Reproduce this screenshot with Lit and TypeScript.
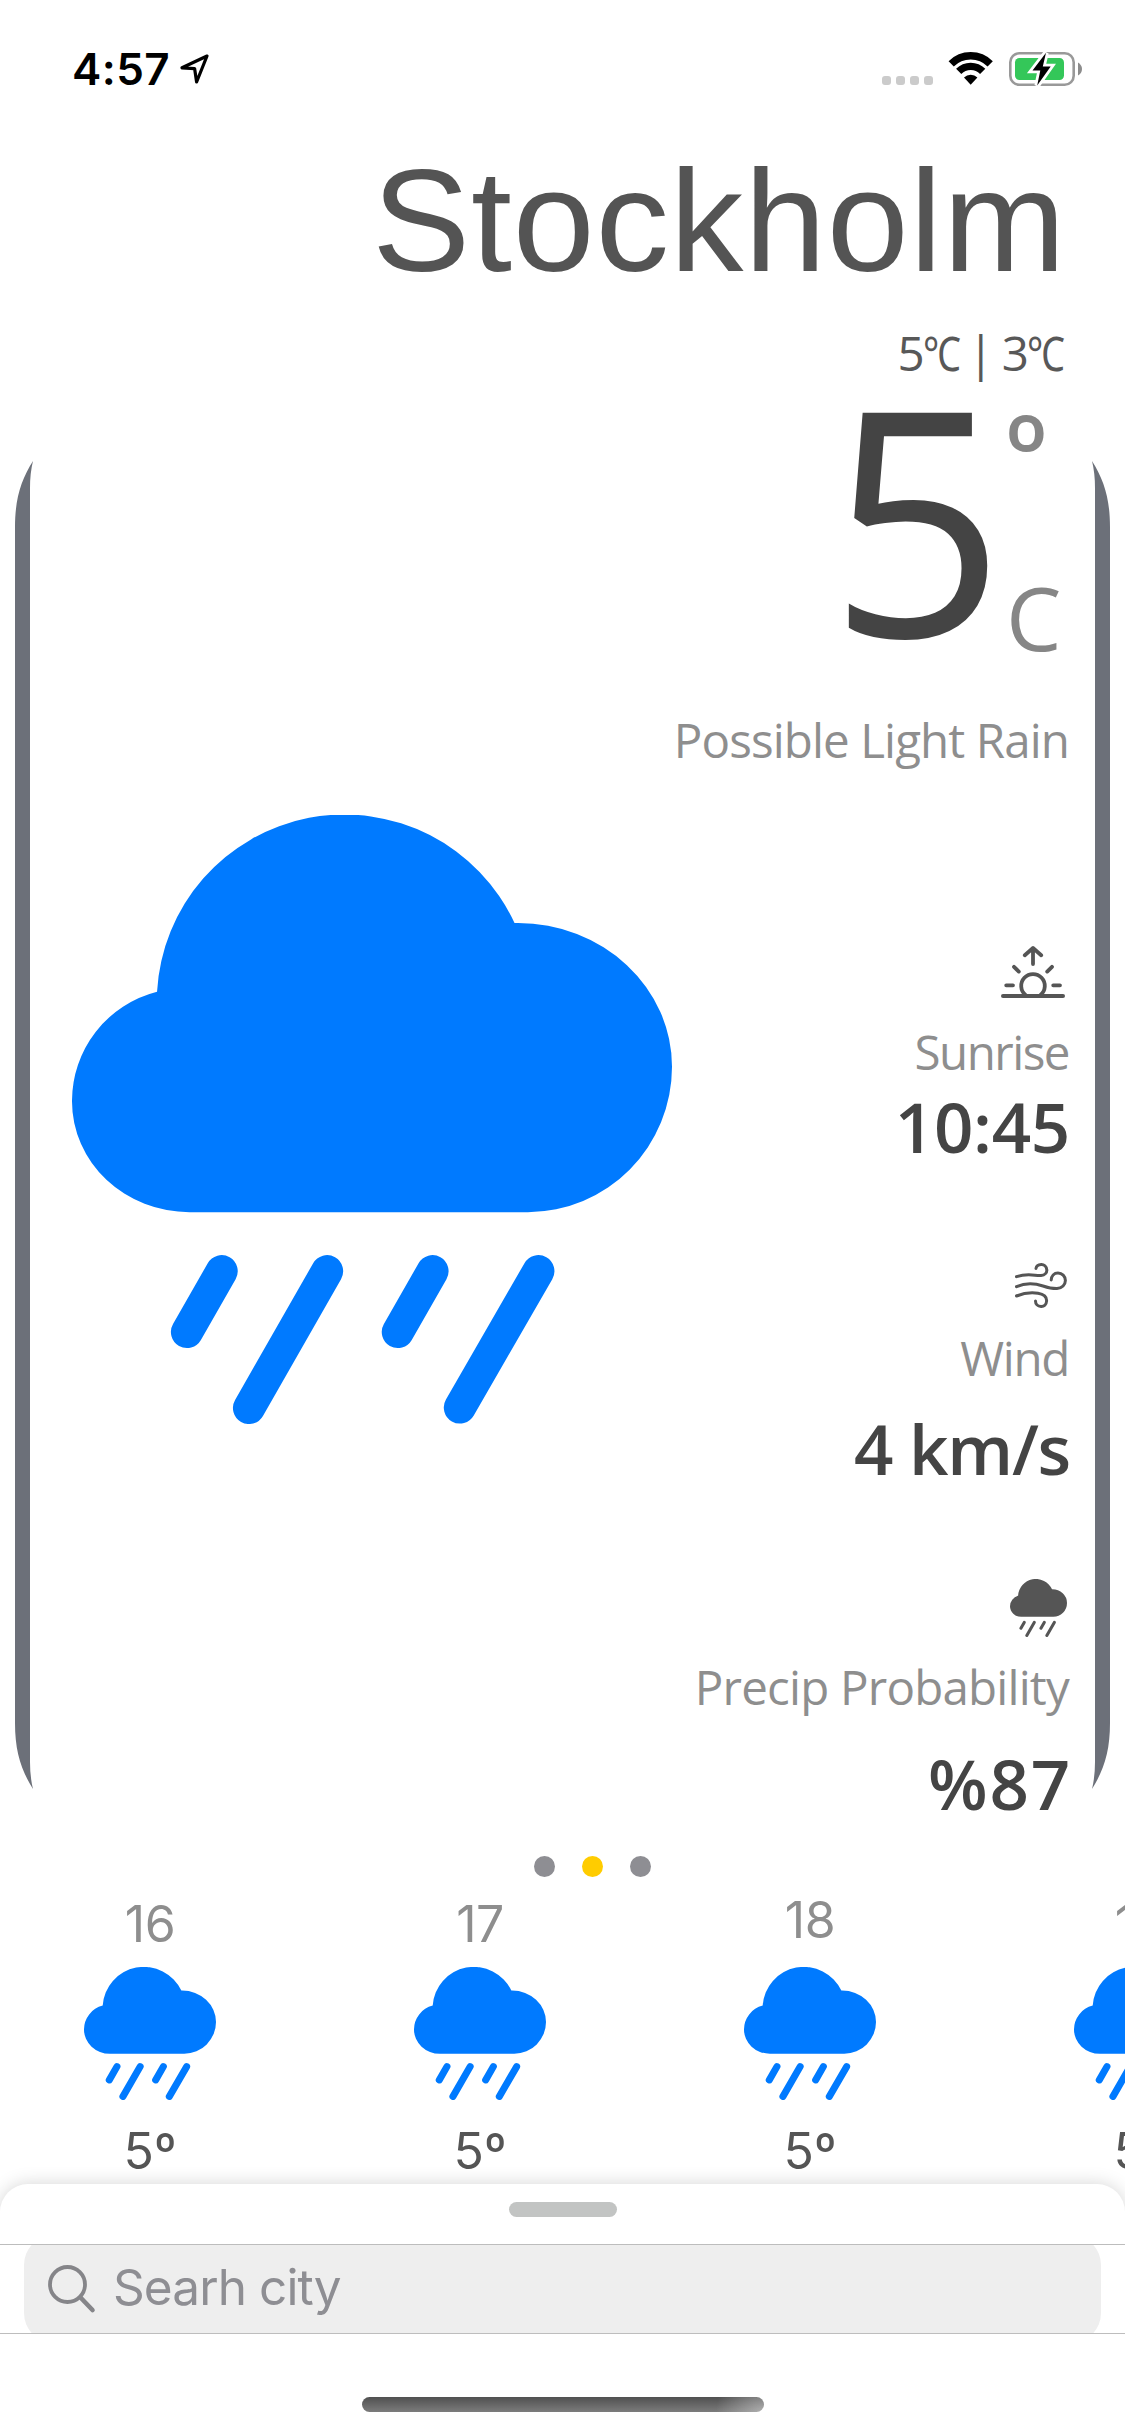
import { LitElement, html, css, svg } from "lit";
import { customElement, property } from "lit/decorators.js";

interface Hour {
  label: string;
  temp: string;
  raised?: boolean;
}

const HOURS: Hour[] = [
  { label: "16", temp: "5º" },
  { label: "17", temp: "5º" },
  { label: "18", temp: "5º", raised: true },
  { label: "19", temp: "5º" },
];

@customElement("rain-cloud")
class RainCloud extends LitElement {
  static styles = css`
    :host {
      display: block;
    }
    svg {
      display: block;
      width: 100%;
      height: 100%;
    }
    .drops {
      stroke: currentColor;
      stroke-width: 74;
      stroke-linecap: round;
    }
  `;
  render() {
    return html`<svg viewBox="74 80 1383 1403" preserveAspectRatio="none" fill="currentColor">
      <path
        d="M345 995A271 255 0 0 1 74 740A260 260 0 0 1 270 487A432.5 432.5 0 0 1 1094 329Q1097 329 1102 329A355 331 0 0 1 1457 660A333 335 0 0 1 1125 995Z"
      />
      <path
        class="drops"
        d="M419 1131L339 1271M662 1131L482 1446M905 1131L825 1271M1149 1131L968 1445"
      />
    </svg>`;
  }
}

@customElement("status-bar")
class StatusBar extends LitElement {
  static styles = css`
    :host {
      display: flex;
      box-sizing: border-box;
      height: 142px;
      padding: 52px 43px 0 72px;
      align-items: flex-start;
    }
    .time {
      font: 600 44px/34px "Inter", sans-serif;
      letter-spacing: 0.4px;
      color: #000;
    }
    .loc {
      margin: 2px auto 0 9px;
    }
    .cell {
      display: flex;
      gap: 5px;
      margin: 24px 15px 0 0;
    }
    .cell i {
      width: 9px;
      height: 9px;
      border-radius: 3px;
      background: #cbcbcb;
    }
    svg {
      display: block;
      flex: none;
    }
    .wifi {
      margin-right: 15px;
    }
  `;
  render() {
    return html`
      <span class="time">4:57</span>
      <svg class="loc" width="31" height="31" viewBox="0 0 31 31">
        <path
          d="M28 2L3 13.8L15.6 14.6L17.6 28Z"
          fill="none"
          stroke="#000"
          stroke-width="3.2"
          stroke-linejoin="round"
        />
      </svg>
      <span class="cell"><i></i><i></i><i></i><i></i></span>
      <svg class="wifi" width="46" height="34" viewBox="0 0 46 34">
        <g fill="none" stroke="#000" stroke-width="7.4">
          <path d="M3.2 11.8A27.6 27.6 0 0 1 42.2 11.8" />
          <path d="M10.7 19.3A17 17 0 0 1 34.7 19.3" />
        </g>
        <path d="M22.7 32.7L16 25.6A9.5 9.5 0 0 1 29.4 25.6Z" />
      </svg>
      <svg width="73" height="34" viewBox="0 0 73 34">
        <rect x="1.3" y="1.3" width="63.4" height="31.4" rx="9" fill="none" stroke="#999" stroke-width="2.6" />
        <path d="M69 10.5Q73 13 73 17T69 23.500Z" fill="#8c8c8c" />
        <rect x="6" y="6" width="49" height="22" rx="4.500" fill="#34c759" />
        <path
          d="M37 .8L23.500 18.400H31.300L28.200 33.600L41.700 14.400H33.800Z"
          fill="#fff"
          stroke="#fff"
          stroke-width="5.500"
        />
        <path d="M37 .8L23.500 18.400H31.300L28.200 33.600L41.700 14.400H33.800Z" />
      </svg>
    `;
  }
}

const sunriseIcon = svg`<g fill="none" stroke="#555" stroke-width="3.8" stroke-linecap="round" stroke-linejoin="round">
  <path d="M2 50H62" stroke-width="4"/>
  <path d="M24.500 49A11.8 11.8 0 1 1 39.500 49"/>
  <path d="M5.200 39.300H12M52.200 39.300H59M13 20.800L17.800 25.600M51 20.800L46.200 25.600"/>
  <path d="M32 2.500V18M23.800 9.200L32 2L40.200 9.200"/>
</g>`;

const windIcon = svg`<g fill="none" stroke="#555" stroke-width="3" stroke-linecap="round">
  <path d="M1.500 13.700C8 11.500 14 11.400 20 12.200C22 12.500 24 12.700 26 12.600C30 12.200 32 9.500 31.800 6.800C31.500 3.500 29 1.500 26.200 1.600C23.500 1.700 21.300 3.300 21 5.400"/>
  <path d="M1.500 23.700C10 20 20 20.400 28 23C34 25 38 25.700 42 25.600C47 25.200 50.400 21.600 50.400 17.600C50.400 13.200 47 10 43 10C39 10 36.400 13 36.200 17"/>
  <path d="M1.500 33C9 30 17 29.400 23 30.300C29 31.300 31.800 34.500 31.600 38C31.400 41.500 29 43.600 26 43.500C22.500 43.400 20.500 41 20.500 38"/>
</g>`;

@customElement("weather-fact")
class WeatherFact extends LitElement {
  @property() name = "";
  @property() value = "";
  @property() kind = "";

  static styles = css`
    :host {
      display: flex;
      flex-direction: column;
      align-items: flex-end;
    }
    svg {
      display: block;
    }
    .icon.sunrise {
      margin: 0 3px 24px 0;
    }
    .icon.wind {
      margin: 0 1px 20px 0;
    }
    .icon.precip {
      width: 57px;
      height: 58px;
      margin: 0 1px 20px 0;
      color: #555;
    }
    .name {
      margin-right: -1px;
      font: 400 47.500px/60px "Open Sans", sans-serif;
      color: #8e8e8e;
      white-space: nowrap;
    }
    .name.sunrise {
      letter-spacing: -1.5px;
    }
    .name.wind {
      letter-spacing: -1.3px;
    }
    .name.precip {
      letter-spacing: -0.8px;
    }
    .value {
      margin-right: -2px;
      font: 600 69px/80px "Open Sans", sans-serif;
      color: #444;
      white-space: nowrap;
    }
    .value.sunrise {
      margin-top: 4px;
      letter-spacing: -0.3px;
    }
    .value.wind {
      margin-top: 20px;
      letter-spacing: -1.2px;
    }
    .value.precip {
      margin: 26px -4px 0 0;
      letter-spacing: 1.8px;
    }
  `;
  render() {
    const icon =
      this.kind === "sunrise"
        ? html`<svg class="icon sunrise" width="64" height="52" viewBox="0 0 64 52">${sunriseIcon}</svg>`
        : this.kind === "wind"
          ? html`<svg class="icon wind" width="52" height="45" viewBox="0 0 52 45">${windIcon}</svg>`
          : html`<rain-cloud class="icon precip"></rain-cloud>`;
    return html`${icon}
      <span class="name ${this.kind}">${this.name}</span>
      <span class="value ${this.kind}">${this.value}</span>`;
  }
}

@customElement("app-root")
class AppRoot extends LitElement {
  static styles = css`
    :host {
      display: flex;
      flex-direction: column;
      width: 1125px;
      height: 2436px;
      overflow: hidden;
      background: #fff;
      font-family: "Open Sans", sans-serif;
    }
    .city {
      align-self: flex-end;
      margin: 0 59px 0 0;
      font: 400 144px/160px "Liberation Sans", Arial, sans-serif;
      letter-spacing: 0.8px;
      color: #545454;
      transform: scaleX(1.022);
      transform-origin: right;
    }
    .range {
      display: flex;
      justify-content: flex-end;
      gap: 8px;
      margin-top: 21px;
      padding-right: 61px;
      font: 400 47.500px/60px "Open Sans", sans-serif;
      color: #585858;
    }
    .bound {
      display: flex;
      letter-spacing: -2px;
    }
    .celsius {
      margin-right: -10px;
      letter-spacing: 0;
      transform: scaleX(0.8);
      transform-origin: left;
    }
    .stage {
      display: flex;
      height: 1440px;
    }
    .rail {
      display: block;
      flex: none;
      width: 18px;
      height: 1328px;
      margin-top: 78px;
    }
    .left {
      margin-left: 15px;
    }
    .right {
      margin-right: 15px;
      transform: scaleX(-1);
    }
    .card {
      flex: 1;
      display: flex;
      justify-content: space-between;
      padding: 0 24px 0 39px;
    }
    .hero {
      flex: none;
      width: 600px;
      height: 609px;
      margin-top: 432px;
      color: #007aff;
    }
    .facts {
      display: flex;
      flex-direction: column;
      align-items: flex-end;
      width: 396px;
    }
    .temp {
      display: flex;
      height: 264px;
      color: #444;
    }
    .num {
      width: 177px;
      font-size: 314px;
      line-height: 264px;
      transform: scaleX(0.98);
      transform-origin: left;
    }
    .unit {
      display: flex;
      flex-direction: column;
      justify-content: space-between;
      width: 62px;
      color: #868686;
    }
    .ring {
      margin-top: 18px;
      font-size: 107px;
      line-height: 100px;
      font-weight: 600;
    }
    .c {
      font-size: 88px;
      line-height: 60px;
    }
    .cond {
      margin: 63px -1px 176px 0;
      font-size: 47.500px;
      line-height: 60px;
      letter-spacing: -0.9px;
      color: #8e8e8e;
      white-space: nowrap;
    }
    .gap {
      margin-top: 97px;
    }
    .gap2 {
      margin-top: 91px;
    }
    .pager {
      display: flex;
      justify-content: center;
      gap: 27px;
      margin-top: 33px;
      padding-left: 60px;
    }
    .dot {
      width: 21px;
      height: 21px;
      border-radius: 50%;
      background: #8e8e93;
    }
    .dot.on {
      background: #fc0;
    }
    .hours {
      display: flex;
      flex: none;
      height: 291px;
      margin: 13px 0 0 -15px;
    }
    .hour {
      flex: none;
      display: flex;
      flex-direction: column;
      align-items: center;
      width: 330px;
      font: 400 50px/60px "Inter", sans-serif;
      color: #555;
    }
    .label {
      box-sizing: border-box;
      height: 78px;
      padding-top: 4px;
      letter-spacing: -0.5px;
      color: #8e8e8e;
    }
    .label.raised {
      padding-top: 0;
    }
    .icon {
      width: 132px;
      height: 133px;
      margin-bottom: 21px;
      color: #007aff;
    }
    .sheet {
      flex: 1;
      display: flex;
      flex-direction: column;
      align-items: center;
      margin-top: 3px;
      border-radius: 28px 28px 0 0;
      background: #fff;
      box-shadow: 0 0 18px rgba(0, 0, 0, 0.17);
    }
    .grip {
      width: 108px;
      height: 15px;
      margin-top: 18px;
      border-radius: 7.500px;
      background: #c2c4c3;
    }
    .search {
      align-self: stretch;
      box-sizing: border-box;
      height: 90px;
      margin-top: 27px;
      padding: 0 24px;
      border: solid #bdbdbd;
      border-width: 1px 0;
      overflow: hidden;
    }
    .field {
      display: flex;
      align-items: center;
      box-sizing: border-box;
      height: 108px;
      margin-top: -10px;
      padding: 0 0 1px 23px;
      border-radius: 30px;
      background: #eee;
      font: 400 49.500px/60px "Inter", sans-serif;
      letter-spacing: -0.9px;
      color: #8e8e93;
    }
    .query {
      padding-bottom: 3px;
    }
    .lens {
      display: block;
      margin-right: 16px;
    }
    .home {
      width: 402px;
      height: 15px;
      margin-top: 63px;
      border-radius: 7.500px;
      background: radial-gradient(circle at 100% 100%, rgba(255, 255, 255, 0.4), rgba(255, 255, 255, 0) 48px),
        linear-gradient(#505050, #7c7c7c);
    }
  `;

  private rail(side: string) {
    return html`<svg class="rail ${side}" viewBox="0 0 18 1328">
      <path
        d="M18 0C6 19 0 38 0 66V1262C0 1290 6 1309 18 1328Q15 1316 15 1301V27Q15 12 18 0Z"
        fill="#6c7079"
      />
    </svg>`;
  }

  private bound(value: number) {
    return html`<span class="bound">${value}<span class="celsius">℃</span></span>`;
  }

  render() {
    return html`
      <status-bar></status-bar>
      <h1 class="city">Stockholm</h1>
      <div class="range">${this.bound(5)}<span>|</span>${this.bound(3)}</div>
      <section class="stage">
        ${this.rail("left")}
        <div class="card">
          <rain-cloud class="hero"></rain-cloud>
          <div class="facts">
            <div class="temp">
              <span class="num">5</span>
              <span class="unit"><span class="ring">º</span><span class="c">C</span></span>
            </div>
            <div class="cond">Possible Light Rain</div>
            <weather-fact kind="sunrise" name="Sunrise" value="10:45"></weather-fact>
            <weather-fact class="gap" kind="wind" name="Wind" value="4 km/s"></weather-fact>
            <weather-fact class="gap2" kind="precip" name="Precip Probability" value="%87"></weather-fact>
          </div>
        </div>
        ${this.rail("right")}
      </section>
      <div class="pager">
        <i class="dot"></i><i class="dot on"></i><i class="dot"></i>
      </div>
      <section class="hours">
        ${HOURS.map(
          (h) => html`<div class="hour">
            <span class="label ${h.raised ? "raised" : ""}">${h.label}</span>
            <rain-cloud class="icon"></rain-cloud>
            <span>${h.temp}</span>
          </div>`,
        )}
      </section>
      <section class="sheet">
        <div class="grip"></div>
        <div class="search">
          <div class="field">
            <svg class="lens" width="50" height="50" viewBox="0 0 50 50">
              <g fill="none" stroke="#858589" stroke-width="3.800" stroke-linecap="round">
                <circle cx="20.500" cy="20.500" r="17.500" />
                <path d="M33.500 33.500L45.500 46" stroke-width="4.600" />
              </g>
            </svg>
            <span class="query">Searh city</span>
          </div>
        </div>
        <div class="home"></div>
      </section>
    `;
  }
}
